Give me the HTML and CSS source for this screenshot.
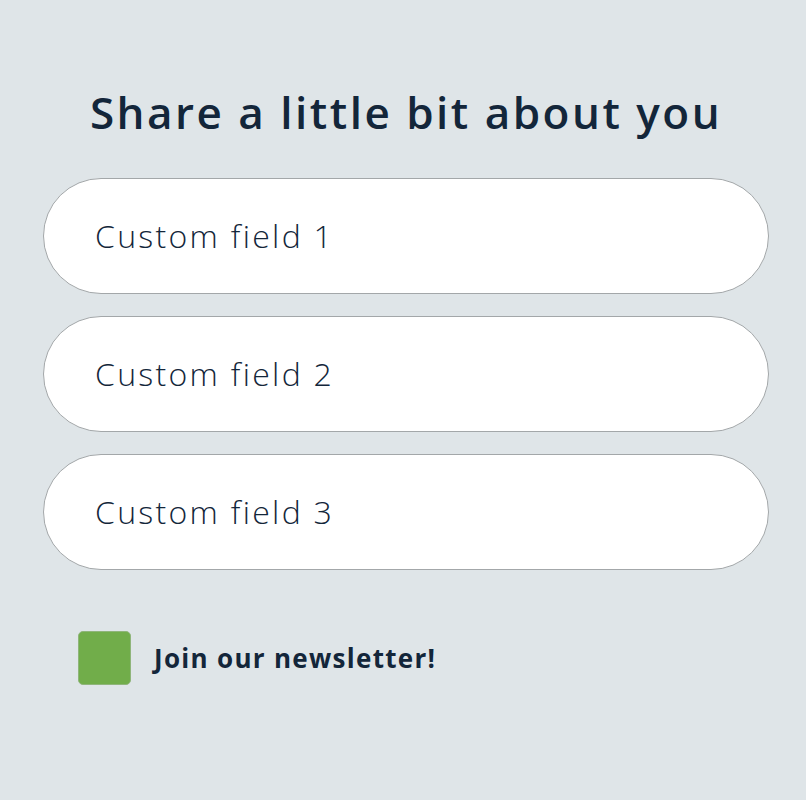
FILE: index.html
```html
<!DOCTYPE html>
<html lang="en">
<head>
<meta charset="utf-8">
<title>Share a little bit about you</title>
<link rel="stylesheet" href="styles.css">
</head>
<body>
<main class="page">
  <h1 class="title">Share a little bit about you</h1>
  <form class="form">
    <input class="field" type="text" placeholder="Custom field 1">
    <input class="field" type="text" placeholder="Custom field 2">
    <input class="field" type="text" placeholder="Custom field 3">
    <label class="check">
      <span class="box"></span>
      <span class="check-label">Join our newsletter!</span>
    </label>
  </form>
</main>
</body>
</html>
```

FILE: styles.css
```css
html, body {
  margin: 0;
  padding: 0;
  background: #dfe5e8;
}
body {
  font-family: "Open Sans", "Noto Sans", sans-serif;
  color: #13263a;
  width: 806px;
  height: 800px;
}
.page {
  padding: 82px 37px 0 43px;
}
.title {
  margin: 0 0 36px;
  text-align: center;
  font-size: 44px;
  line-height: 60px;
  font-weight: 600;
  letter-spacing: 2.5px;
  color: #13263a;
}
.form {
  display: flex;
  flex-direction: column;
  gap: 22px;
}
.field {
  box-sizing: border-box;
  width: 726px;
  height: 116px;
  border: 1px solid #a3a7a9;
  border-radius: 58px;
  background: #ffffff;
  padding: 0 0 2px 51px;
  font-family: "Open Sans", "Noto Sans", sans-serif;
  font-size: 32px;
  font-weight: 300;
  color: #13263a;
  outline: none;
}
.field::placeholder {
  color: #13263a;
  opacity: 1;
  letter-spacing: 2.3px;
}
.check {
  display: flex;
  align-items: center;
  gap: 23px;
  margin-top: 39px;
  padding-left: 35px;
}
.box {
  width: 51px;
  height: 52px;
  border-radius: 5px;
  background: #71ad4a;
  border: 1px solid #8fb57a;
}
.check-label {
  font-size: 26px;
  font-weight: 700;
  letter-spacing: 1.3px;
}
```
